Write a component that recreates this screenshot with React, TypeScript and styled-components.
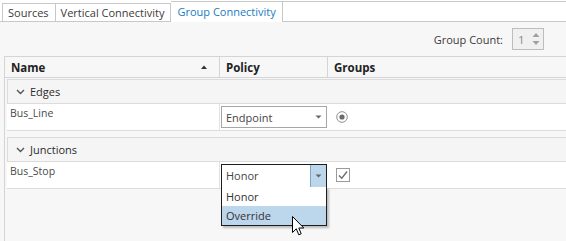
import React from "react";
import styled, { createGlobalStyle } from "styled-components";

const Global = createGlobalStyle`
  html, body { margin: 0; padding: 0; }
  body {
    width: 566px;
    height: 241px;
    overflow: hidden;
    background: #f7f7f7;
    font-family: "Open Sans", "Noto Sans", sans-serif;
    color: #3b3b3b;
  }
  #root { height: 241px; }
`;

const Page = styled.div`
  display: flex;
  flex-direction: column;
  height: 241px;
  overflow: hidden;
`;

const TabStrip = styled.div`
  display: flex;
  align-items: flex-end;
  height: 21px;
  padding-left: 2px;
  background: #ffffff;
  border-bottom: 1px solid #c8c8c8;
`;

const Tab = styled.div<{ $active?: boolean; $first?: boolean }>`
  position: relative;
  box-sizing: border-box;
  display: flex;
  align-items: center;
  height: ${(p) => (p.$active ? "21px" : "18px")};
  margin-bottom: ${(p) => (p.$active ? "-1px" : "0")};
  padding: ${(p) => (p.$active ? "0 6px 2px 6px" : "0 6px 0 5px")};
  background: #ffffff;
  border-top: 1px solid #c8c8c8;
  border-right: 1px solid #c8c8c8;
  border-left: ${(p) => (p.$first ? "1px solid #c8c8c8" : "none")};
  font-size: 11px;
  color: ${(p) => (p.$active ? "#1a7bc4" : "#3b3b3b")};
  white-space: nowrap;
`;

const TabFiller = styled.div`
  flex: 1;
  align-self: stretch;
  margin-top: 1px;
  border-top: 1px solid #c8c8c8;
`;

const Toolbar = styled.div`
  display: flex;
  align-items: center;
  justify-content: flex-end;
  gap: 9px;
  height: 34px;
  padding-right: 22px;
`;

const Label = styled.span`
  font-size: 11px;
  color: #3b3b3b;
`;

const Spinner = styled.div`
  box-sizing: border-box;
  display: flex;
  align-items: center;
  justify-content: space-between;
  width: 32px;
  height: 22px;
  padding: 0 3px 0 5px;
  border: 1px solid #bdbdbd;
  background: #f0f0f0;
  font-size: 11.5px;
  color: #8a8a8a;
`;

const Grid = styled.div`
  flex: 1;
  margin-left: 4px;
  border-left: 1px solid #d4d4d4;
  border-top: 1px solid #d4d4d4;
  position: relative;
`;

const HeaderRow = styled.div`
  display: grid;
  grid-template-columns: 215px 108px 1fr;
  height: 20px;
  border-bottom: 1px solid #d4d4d4;
`;

const HeaderCell = styled.div<{ $last?: boolean }>`
  display: flex;
  align-items: center;
  justify-content: space-between;
  padding: 0 12px 0 6px;
  border-right: ${(p) => (p.$last ? "none" : "1px solid #d4d4d4")};
  font-size: 11.5px;
  font-weight: 700;
  color: #222;
`;

const GroupRow = styled.div<{ $gap: number }>`
  box-sizing: border-box;
  display: flex;
  align-items: center;
  gap: 5px;
  height: 25px;
  margin: ${(p) => p.$gap}px 0 0 2px;
  padding-left: 8px;
  border: 1px solid #dcdcdc;
  border-right: none;
  background: #f5f5f5;
  font-size: 11px;
  color: #2b2b2b;
`;

const DataRow = styled.div`
  position: relative;
  display: grid;
  grid-template-columns: 213px 108px 1fr;
  height: 26px;
  margin-left: 2px;
  background: #ffffff;
  border-bottom: 1px solid #dcdcdc;
`;

const NameCell = styled.div`
  padding: 2px 0 0 3px;
  font-size: 10.5px;
  color: #4a4a4a;
  border-right: 1px solid #e3e3e3;
`;

const PolicyCell = styled.div`
  display: flex;
  align-items: center;
  padding-left: 1px;
`;

const GroupsCell = styled.div`
  display: flex;
  align-items: center;
  padding-left: 8px;
`;

const Combo = styled.div<{ $open?: boolean }>`
  position: relative;
  box-sizing: border-box;
  display: flex;
  align-items: center;
  width: 106px;
  height: ${(p) => (p.$open ? "24px" : "22px")};
  margin-top: ${(p) => (p.$open ? "1px" : "0")};
  padding-left: 4px;
  border: 1px solid ${(p) => (p.$open ? "#1e1e1e" : "#a6a6a6")};
  background: #ffffff;
  font-size: 11px;
  color: #444;
`;

const ComboButton = styled.div<{ $open?: boolean }>`
  position: absolute;
  top: 0;
  right: 0;
  bottom: 0;
  width: 15px;
  display: flex;
  align-items: center;
  justify-content: center;
  background: ${(p) => (p.$open ? "#bcd6ec" : "transparent")};
  border-left: ${(p) => (p.$open ? "1px solid #7ba7cf" : "none")};
`;

const DropList = styled.div`
  position: absolute;
  left: -1px;
  top: 100%;
  width: 106px;
  box-sizing: border-box;
  border: 1px solid #1e1e1e;
  border-top: none;
  background: #ffffff;
  box-shadow: 2px 2px 2px rgba(0, 0, 0, 0.25);
  z-index: 5;
`;

const DropItem = styled.div<{ $hot?: boolean }>`
  height: 19px;
  display: flex;
  align-items: center;
  padding-left: 4px;
  font-size: 11px;
  color: #333;
  background: ${(p) => (p.$hot ? "#bcd6ec" : "#ffffff")};
`;

const Cursor = styled.svg`
  position: absolute;
  left: 70px;
  top: 29px;
  z-index: 6;
`;

const Caret = ({ color = "#666" }: { color?: string }) => (
  <svg width="7" height="4" viewBox="0 0 7 4">
    <path d="M0.5 0.5 L6.5 0.5 L3.5 3.5 Z" fill={color} />
  </svg>
);

const Chevron = () => (
  <svg width="9" height="6" viewBox="0 0 9 6">
    <path d="M1 1 L4.5 4.5 L8 1" fill="none" stroke="#555" strokeWidth="1.4" />
  </svg>
);

const SortUp = () => (
  <svg width="6" height="4" viewBox="0 0 6 4">
    <path d="M0 4 L3 0.5 L6 4 Z" fill="#333" />
  </svg>
);

const SpinArrows = () => (
  <svg width="8" height="16" viewBox="0 0 8 16">
    <path d="M0.5 6 L4 2 L7.5 6 Z" fill="#a0a0a0" />
    <path d="M0.5 10 L4 14 L7.5 10 Z" fill="#a0a0a0" />
  </svg>
);

const Radio = () => (
  <svg width="12" height="12" viewBox="0 0 12 12">
    <circle cx="6" cy="6" r="5.3" fill="#fff" stroke="#8f8f8f" strokeWidth="1" />
    <circle cx="6" cy="6" r="2.6" fill="#6a6a6a" />
  </svg>
);

const Check = () => (
  <svg width="14" height="14" viewBox="0 0 14 14">
    <rect x="0.5" y="0.5" width="13" height="13" fill="#fff" stroke="#9a9a9a" />
    <path d="M3 7.5 L5.8 10.2 L11 3.5" fill="none" stroke="#6a6a6a" strokeWidth="1.3" />
  </svg>
);

export default function App() {
  return (
    <>
      <Global />
      <Page>
        <TabStrip>
          <Tab $first>Sources</Tab>
          <Tab>Vertical Connectivity</Tab>
          <Tab $active>Group Connectivity</Tab>
          <TabFiller />
        </TabStrip>
        <Toolbar>
          <Label>Group Count:</Label>
          <Spinner>
            <span>1</span>
            <SpinArrows />
          </Spinner>
        </Toolbar>
        <Grid>
          <HeaderRow>
            <HeaderCell>
              <span>Name</span>
              <SortUp />
            </HeaderCell>
            <HeaderCell>Policy</HeaderCell>
            <HeaderCell $last>Groups</HeaderCell>
          </HeaderRow>
          <GroupRow $gap={1}>
            <Chevron />
            <span>Edges</span>
          </GroupRow>
          <DataRow>
            <NameCell>Bus_Line</NameCell>
            <PolicyCell>
              <Combo>
                Endpoint
                <ComboButton>
                  <Caret />
                </ComboButton>
              </Combo>
            </PolicyCell>
            <GroupsCell>
              <Radio />
            </GroupsCell>
          </DataRow>
          <GroupRow $gap={6}>
            <Chevron />
            <span>Junctions</span>
          </GroupRow>
          <DataRow>
            <NameCell>Bus_Stop</NameCell>
            <PolicyCell>
              <Combo $open>
                Honor
                <ComboButton $open>
                  <Caret />
                </ComboButton>
                <DropList>
                  <DropItem>Honor</DropItem>
                  <DropItem $hot>Override</DropItem>
                  <Cursor width="13" height="21" viewBox="0 0 13 21">
                    <path
                      d="M0.5 0.5 L0.5 16.5 L4.3 12.8 L6.8 18.8 L9.2 17.8 L6.8 12 L11.8 12 Z"
                      fill="#ffffff"
                      stroke="#000000"
                      strokeWidth="1"
                      strokeLinejoin="round"
                    />
                  </Cursor>
                </DropList>
              </Combo>
            </PolicyCell>
            <GroupsCell>
              <Check />
            </GroupsCell>
          </DataRow>
        </Grid>
      </Page>
    </>
  );
}
